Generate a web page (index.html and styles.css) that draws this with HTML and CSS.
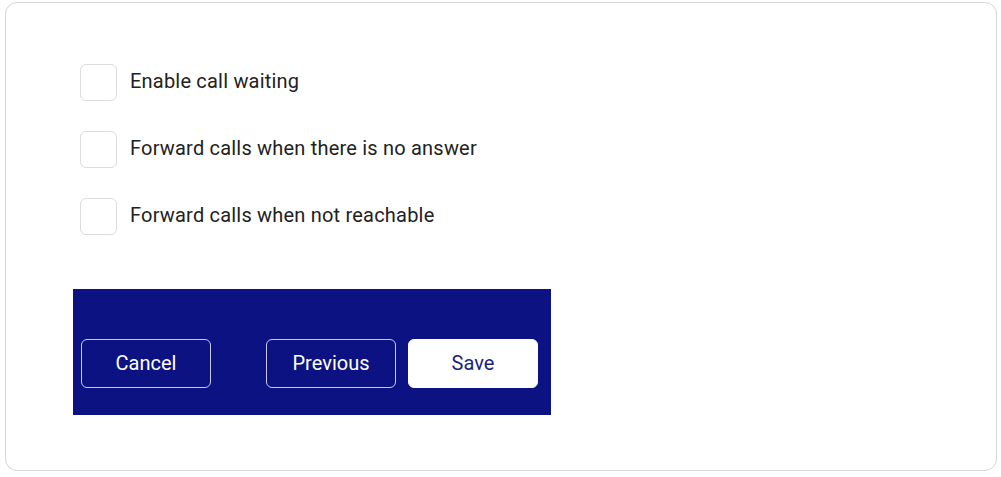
FILE: index.html
```html
<!DOCTYPE html>
<html lang="en">
<head>
    <meta charset="UTF-8">
    <meta name="viewport" content="width=device-width, initial-scale=1.0">
    <title>Call Settings</title>
    <link rel="stylesheet" href="styles.css">
</head>
<body>
    <div class="card">
        <ul class="options">
            <li class="option">
                <span class="box"></span>
                <span class="label">Enable call waiting</span>
            </li>
            <li class="option">
                <span class="box"></span>
                <span class="label">Forward calls when there is no answer</span>
            </li>
            <li class="option">
                <span class="box"></span>
                <span class="label">Forward calls when not reachable</span>
            </li>
        </ul>

        <div class="actions">
            <button class="btn btn-outline">Cancel</button>
            <div class="actions-right">
                <button class="btn btn-outline">Previous</button>
                <button class="btn btn-solid">Save</button>
            </div>
        </div>
    </div>
</body>
</html>
```

FILE: styles.css
```css
* {
    margin: 0;
    padding: 0;
    box-sizing: border-box;
}

body {
    font-family: Roboto, "Liberation Sans", sans-serif;
    background: #fff;
    color: #222;
}

/* Card */
.card {
    margin: 2px 4px 0 5px;
    height: 469px;
    border: 1px solid #d6d6d6;
    border-radius: 12px;
    padding: 61px 0 0 67px;
}

/* Checkbox list */
.options {
    list-style: none;
    display: flex;
    flex-direction: column;
    gap: 30px;
    padding-left: 7px;
}

.option {
    display: flex;
    align-items: center;
    gap: 13px;
    height: 37px;
}

.box {
    width: 37px;
    height: 37px;
    border: 1px solid #dcdcdc;
    border-radius: 6px;
    background: #fff;
}

.label {
    font-size: 20px;
    letter-spacing: 0.2px;
    color: #222;
    margin-bottom: 4px;
}

/* Button bar */
.actions {
    margin-top: 54px;
    width: 478px;
    height: 126px;
    background: #0d1282;
    padding: 50px 13px 0 8px;
    display: flex;
    justify-content: space-between;
    align-items: flex-start;
}

.actions-right {
    display: flex;
    gap: 12px;
}

.btn {
    width: 130px;
    height: 49px;
    border-radius: 6px;
    font-family: Roboto, "Liberation Sans", sans-serif;
    font-size: 20px;
    padding-bottom: 2px;
    cursor: pointer;
}

.btn-outline {
    background: transparent;
    color: #fff;
    border: 1.5px solid #c9c9ec;
}

.btn-solid {
    background: #fff;
    color: #1c1f7e;
    border: 1.5px solid #fff;
}
```
